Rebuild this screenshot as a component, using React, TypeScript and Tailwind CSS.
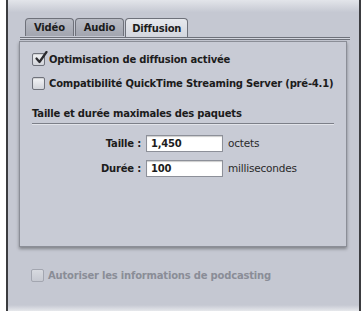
import type { ReactNode } from "react";

const font = {
  fontFamily: '"DejaVu Sans", "Liberation Sans", sans-serif',
  letterSpacing: "-0.2px",
};

function Tab({ label, active = false }: { label: string; active?: boolean }) {
  return (
    <div
      className={
        active
          ? "flex h-[19px] items-center rounded-t-[4px] border border-b-0 border-[#6e717a] bg-gradient-to-b from-[#e6e8ed] to-[#d3d6de] px-[6px] text-[10px] font-bold text-[#1c1c1c]"
          : "flex h-[18px] items-center rounded-t-[4px] border border-b-0 border-[#6e717a] bg-gradient-to-b from-[#b9bcc5] to-[#a2a5af] px-[8px] text-[10px] font-bold text-[#1c1c1c]"
      }
    >
      {label}
    </div>
  );
}

function Checkbox({
  checked = false,
  disabled = false,
}: {
  checked?: boolean;
  disabled?: boolean;
}) {
  return (
    <div
      className={
        disabled
          ? "relative h-[13px] w-[13px] shrink-0 rounded-[2px] border border-[#a3a6b0] bg-gradient-to-b from-[#d8dae0] to-[#c6c9d1]"
          : "relative h-[13px] w-[13px] shrink-0 rounded-[2px] border border-[#6f727b] bg-gradient-to-b from-[#f4f5f7] to-[#d2d4da] shadow-[inset_0_1px_1px_rgba(0,0,0,0.15)]"
      }
    >
      {checked && (
        <svg
          viewBox="0 0 14 14"
          className="absolute -top-[3px] left-[1px] h-[14px] w-[14px]"
        >
          <path
            d="M2.5 7.5 L5.5 11 L12.5 1"
            fill="none"
            stroke="#2a2a2e"
            strokeWidth="2.2"
            strokeLinecap="round"
            strokeLinejoin="round"
          />
        </svg>
      )}
    </div>
  );
}

function Field({
  label,
  value,
  unit,
}: {
  label: string;
  value: string;
  unit: string;
}) {
  return (
    <div className="flex h-[17px] items-center">
      <div className="w-[114px] pr-[5px] text-right text-[10px] font-bold text-[#1c1c1c]">
        {label}
      </div>
      <div className="flex h-[17px] w-[77px] items-center border border-[#8d9099] bg-white pl-[4px] text-[10px] font-bold text-[#1c1c1c] shadow-[inset_0_1px_1px_rgba(0,0,0,0.2)]">
        {value}
      </div>
      <div className="pl-[5px] text-[10.5px] text-[#2a2a2a]">{unit}</div>
    </div>
  );
}

function Row({ children }: { children: ReactNode }) {
  return (
    <div className="flex h-[13px] items-center gap-[4px] whitespace-nowrap">
      {children}
    </div>
  );
}

export default function App() {
  return (
    <div className="flex h-[320px] w-[362px] bg-white" style={font}>
      <div className="ml-[6px] flex h-[311px] w-[355px] flex-col border-l-2 border-r-2 border-[#3b3c40] bg-[#c5c8d2] bg-gradient-to-b from-[#e3e5ea] from-0% to-[#c5c8d2] to-[4%]">
        <div className="mt-[18px] flex gap-[1px] pl-[17px]">
          <Tab label="Vidéo" />
          <Tab label="Audio" />
          <Tab label="Diffusion" active />
        </div>
        <div className="ml-[12px] h-[3px] w-[330px] border-t border-b border-[#6e717a] bg-[#d3d6de]" />

        <div className="ml-[11px] mt-[1px] flex h-[206px] w-[328px] flex-col border border-[#8b8e97] bg-[#c8cbd5] px-[12px] pt-[11px] shadow-[0_2px_3px_rgba(0,0,0,0.35)]">
          <Row>
            <Checkbox checked />
            <span className="text-[10px] font-bold text-[#1c1c1c]">
              Optimisation de diffusion activée
            </span>
          </Row>
          <div className="mt-[11px]">
            <Row>
              <Checkbox />
              <span className="text-[10px] font-bold text-[#1c1c1c]">
                Compatibilité QuickTime Streaming Server (pré-4.1)
              </span>
            </Row>
          </div>
          <div className="mt-[16px] whitespace-nowrap text-[10px] leading-[15px] font-bold text-[#1c1c1c]">
            Taille et durée maximales des paquets
          </div>
          <div className="mt-[2px] h-[2px] w-[302px] border-t border-[#7c7f88] bg-[#e2e4ea]" />
          <div className="mt-[10px] flex flex-col gap-[8px]">
            <Field label="Taille :" value="1,450" unit="octets" />
            <Field label="Durée :" value="100" unit="millisecondes" />
          </div>
        </div>

        <div className="ml-[23px] mt-[21px] flex items-center gap-[4px] whitespace-nowrap">
          <Checkbox disabled />
          <span className="text-[10px] font-bold text-[#8a8d97]">
            Autoriser les informations de podcasting
          </span>
        </div>
        <div className="flex-1" />
        <div className="h-[6px] bg-gradient-to-b from-[#c5c8d2] to-[#e6e8ec]" />
      </div>
    </div>
  );
}
